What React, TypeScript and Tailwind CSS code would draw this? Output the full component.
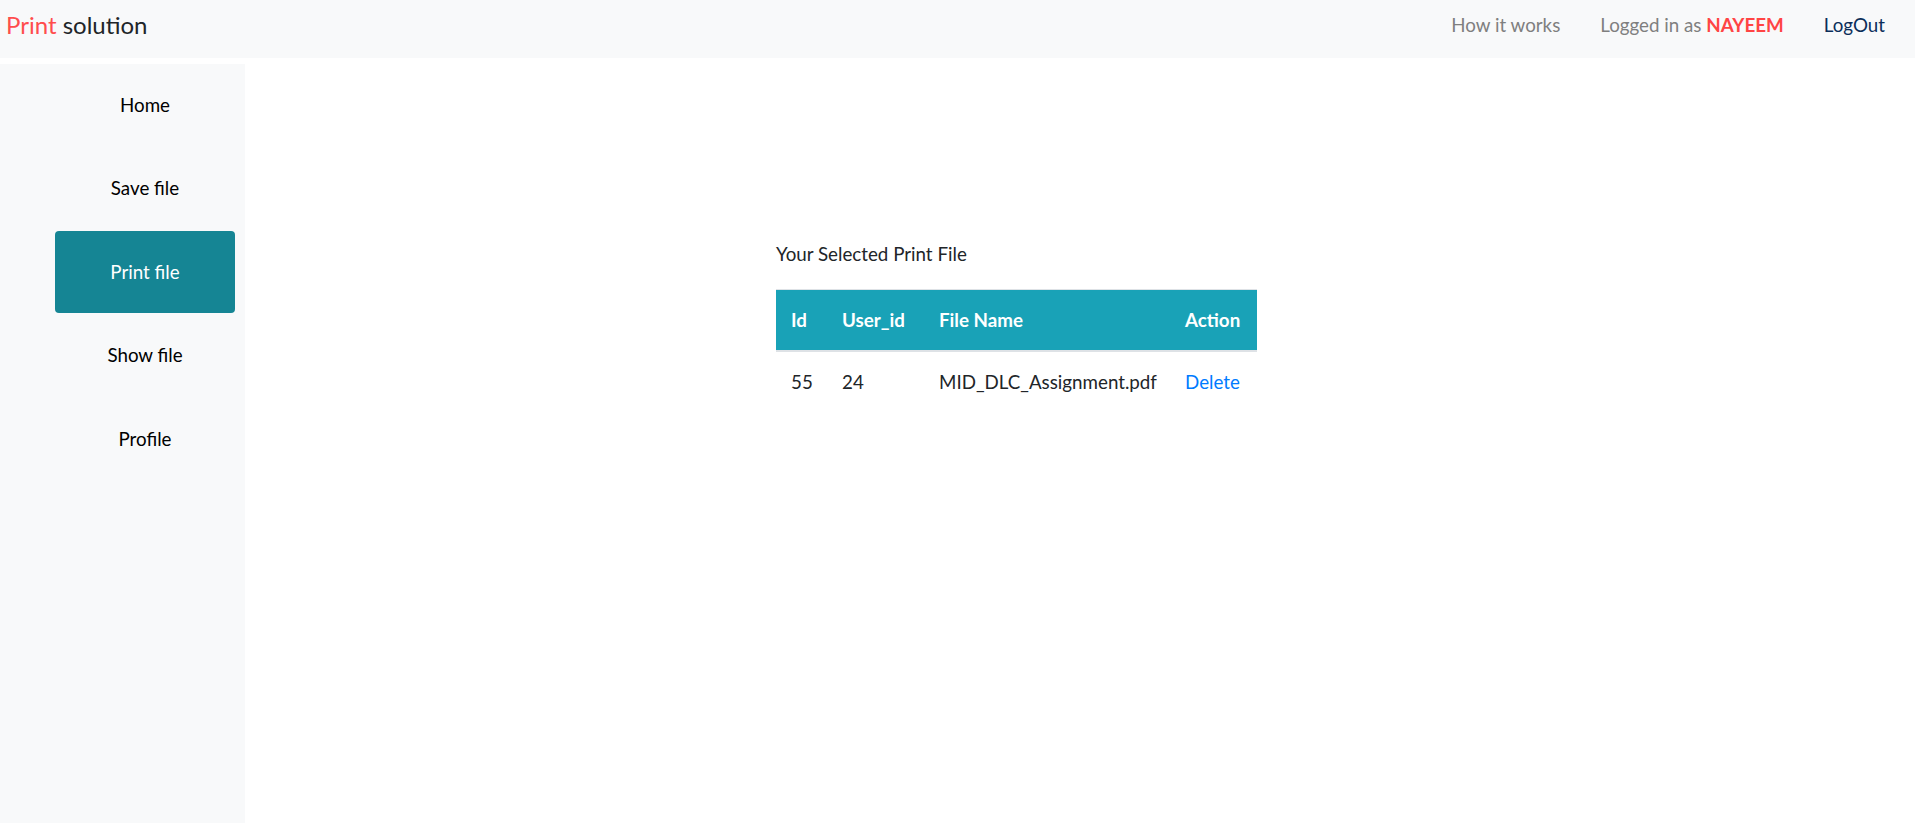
import React from "react";

const font = { fontFamily: "Lato, 'Noto Sans', sans-serif" };

export default function App() {
  const items = ["Home", "Save file", "Print file", "Show file", "Profile"];
  return (
    <div className="w-[1915px] h-[823px] bg-white flex flex-col overflow-hidden" style={font}>
      <nav className="h-[58px] bg-[#f8f9fa] flex items-start justify-between pl-[6px] pr-[30px] pt-[8px]">
        <div className="text-[24px] leading-[34px] text-[#212529]">
          <span className="text-[#ff4d4d]">Print</span> solution
        </div>
        <div className="flex items-center gap-[40px] text-[18.75px] leading-[34px]">
          <span className="text-[#7f7f7f]">How it works</span>
          <span className="text-[#7f7f7f]">
            Logged in as <span className="font-bold text-[#ff4444]">NAYEEM</span>
          </span>
          <span className="text-[#0b2e5a]">LogOut</span>
        </div>
      </nav>
      <div className="flex flex-1 mt-[6px]">
        <aside className="w-[245px] bg-[#f8f9fa] flex flex-col items-start pl-[55px] gap-[1.5px]">
          {items.map((it) => (
            <div
              key={it}
              className={
                it === "Print file"
                  ? "w-[180px] h-[82px] flex items-center justify-center rounded-[4px] bg-[#158594] text-white text-[18.75px]"
                  : "w-[180px] h-[82px] flex items-center justify-center text-black text-[18.75px]"
              }
            >
              {it}
            </div>
          ))}
        </aside>
        <main className="flex-1 pl-[531px] pt-[177px]">
          <div className="text-[18.75px] leading-[26px] text-[#212529]">Your Selected Print File</div>
          <table className="mt-[22px] w-[481px] border-collapse text-[18.75px] text-[#212529] border-t border-[#dee2e6]">
            <thead>
              <tr className="bg-[#19a2b7] text-white font-bold h-[61px]">
                <th className="w-[51px] text-left pl-[15px] font-bold border-b-2 border-[#dee2e6]">Id</th>
                <th className="w-[97px] text-left pl-[15px] font-bold border-b-2 border-[#dee2e6]">User_id</th>
                <th className="w-[246px] text-left pl-[15px] font-bold border-b-2 border-[#dee2e6]">File Name</th>
                <th className="text-left pl-[15px] font-bold border-b-2 border-[#dee2e6]">Action</th>
              </tr>
            </thead>
            <tbody>
              <tr className="h-[62px]">
                <td className="pl-[15px]">55</td>
                <td className="pl-[15px]">24</td>
                <td className="pl-[15px]">MID_DLC_Assignment.pdf</td>
                <td className="pl-[15px] text-[#007bff]">Delete</td>
              </tr>
            </tbody>
          </table>
        </main>
      </div>
    </div>
  );
}
